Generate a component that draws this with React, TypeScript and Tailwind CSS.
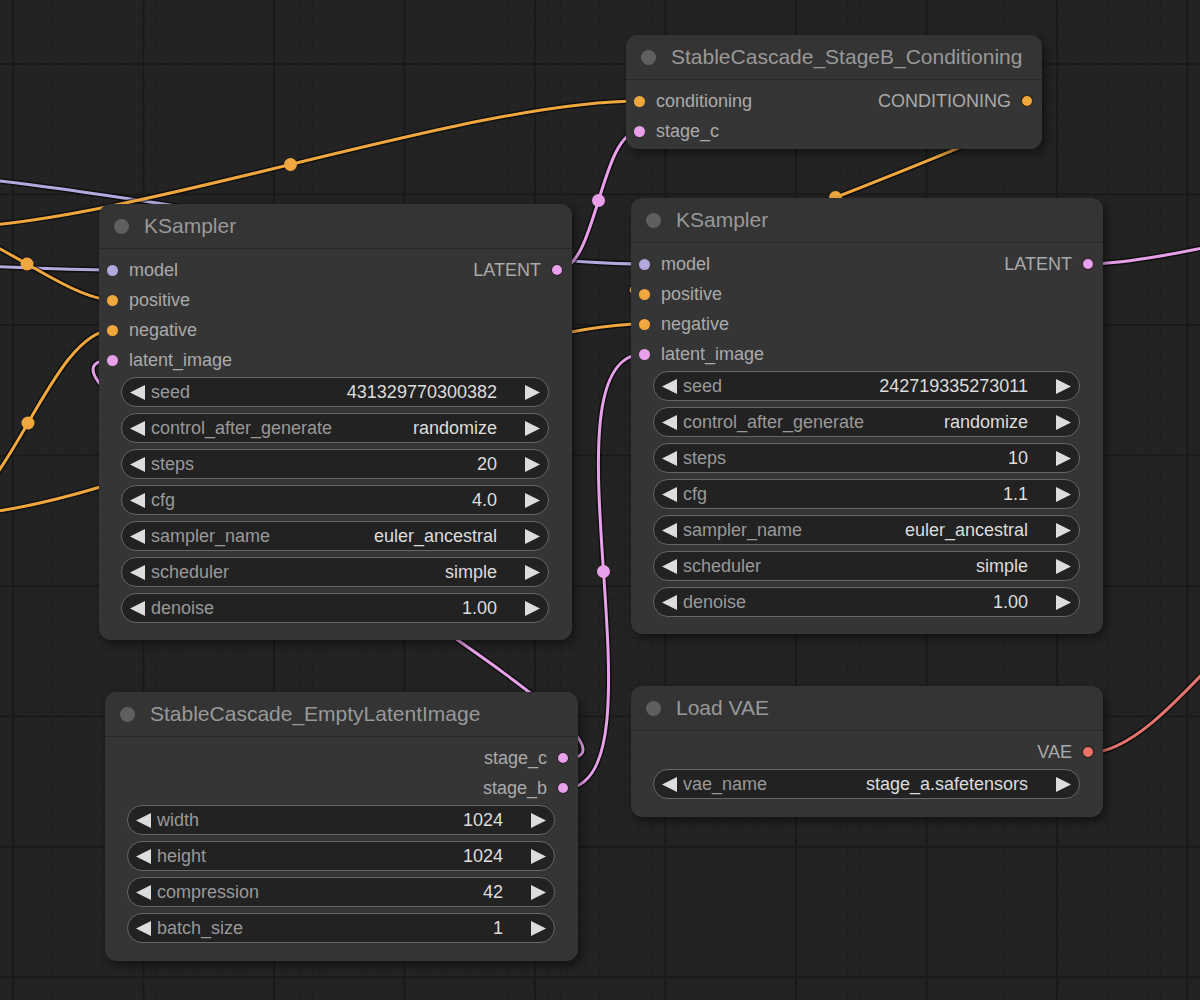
import React from 'react';

type Slot = { label: string; dot: string };
type Row = { in?: Slot; out?: Slot };
type Widget = { label: string; value: string };
type NodeDef = { pos: string; title: string; rows: Row[]; widgets: Widget[]; body: string };

const ORANGE = '#f0a83e';
const LAVENDER = '#b4a8de';
const PINK = '#e8a0ea';
const RED = '#e4746c';

const model: Slot = { label: 'model', dot: 'bg-[#b4a8de]' };
const positive: Slot = { label: 'positive', dot: 'bg-[#f0a83e]' };
const negative: Slot = { label: 'negative', dot: 'bg-[#f0a83e]' };
const latentImage: Slot = { label: 'latent_image', dot: 'bg-[#e8a0ea]' };
const latentOut: Slot = { label: 'LATENT', dot: 'bg-[#e8a0ea]' };

const sampler = (seed: string, steps: string, cfg: string): Widget[] => [
  { label: 'seed', value: seed },
  { label: 'control_after_generate', value: 'randomize' },
  { label: 'steps', value: steps },
  { label: 'cfg', value: cfg },
  { label: 'sampler_name', value: 'euler_ancestral' },
  { label: 'scheduler', value: 'simple' },
  { label: 'denoise', value: '1.00' },
];

const samplerRows: Row[] = [{ in: model, out: latentOut }, { in: positive }, { in: negative }, { in: latentImage }];

const nodes: NodeDef[] = [
  {
    pos: 'left-[626px] top-[35px] w-[416px]',
    title: 'StableCascade_StageB_Conditioning',
    rows: [
      { in: { label: 'conditioning', dot: 'bg-[#f0a83e]' }, out: { label: 'CONDITIONING', dot: 'bg-[#f0a83e]' } },
      { in: { label: 'stage_c', dot: 'bg-[#e8a0ea]' } },
    ],
    widgets: [],
    body: 'pt-[6px] pb-[3px]',
  },
  {
    pos: 'left-[99px] top-[204px] w-[473px]',
    title: 'KSampler',
    rows: samplerRows,
    widgets: sampler('431329770300382', '20', '4.0'),
    body: 'pt-[6px] pb-[17px]',
  },
  {
    pos: 'left-[631px] top-[198px] w-[472px]',
    title: 'KSampler',
    rows: samplerRows,
    widgets: sampler('242719335273011', '10', '1.1'),
    body: 'pt-[6px] pb-[17px]',
  },
  {
    pos: 'left-[105px] top-[692px] w-[473px]',
    title: 'StableCascade_EmptyLatentImage',
    rows: [{ out: { label: 'stage_c', dot: 'bg-[#e8a0ea]' } }, { out: { label: 'stage_b', dot: 'bg-[#e8a0ea]' } }],
    widgets: [
      { label: 'width', value: '1024' },
      { label: 'height', value: '1024' },
      { label: 'compression', value: '42' },
      { label: 'batch_size', value: '1' },
    ],
    body: 'pt-[6px] pb-[18px]',
  },
  {
    pos: 'left-[631px] top-[686px] w-[472px]',
    title: 'Load VAE',
    rows: [{ out: { label: 'VAE', dot: 'bg-[#e4746c]' } }],
    widgets: [{ label: 'vae_name', value: 'stage_a.safetensors' }],
    body: 'pt-[6px] pb-[18px]',
  },
];

// link: [x1, y1, x2, y2, colour, show centre dot]
const links: [number, number, number, number, string, boolean][] = [
  [-150, 262, 113, 270, LAVENDER, false],
  [-150, 170, 644, 264, LAVENDER, false],
  [-59, 228, 640, 101, ORANGE, true],
  [-59, 228, 113, 300, ORANGE, true],
  [-57, 516, 113, 330, ORANGE, true],
  [-57, 516, 644, 324, ORANGE, false],
  [557, 270, 640, 131, PINK, true],
  [563, 759, 113, 360, PINK, false],
  [563, 789, 644, 354, PINK, true],
  [1027, 101, 644, 294, ORANGE, true],
  [1088, 264, 1400, 215, PINK, false],
  [1088, 753, 1350, 560, RED, false],
];

const bezier = (x1: number, y1: number, x2: number, y2: number) => {
  const d = Math.hypot(x2 - x1, y2 - y1) * 0.25;
  return `M${x1} ${y1} C${x1 + d} ${y1} ${x2 - d} ${y2} ${x2} ${y2}`;
};

const Arrow = ({ right }: { right?: boolean }) => (
  <svg width="15" height="15" viewBox="0 0 15 15" className="shrink-0">
    <polygon points={right ? '0,0 15,7.5 0,15' : '15,0 0,7.5 15,15'} fill="#dddddd" />
  </svg>
);

const GraphNode = ({ n }: { n: NodeDef }) => (
  <div className={`absolute ${n.pos} rounded-[12px] bg-[#353535] shadow-[3px_4px_8px_rgba(0,0,0,0.45)]`}>
    <div className="flex h-[45px] items-center gap-[15px] rounded-t-[12px] border-b border-[#282828] bg-[#343434] pl-[15px]">
      <span className="size-[15px] rounded-full bg-[#5f5f5f]" />
      <span className="text-[21px] text-[#999]">{n.title}</span>
    </div>
    <div className={n.body}>
      {n.rows.map((r, i) => (
        <div key={i} className="flex h-[30px] items-center justify-between text-[18px] text-[#aaa]">
          {r.in ? (
            <div className="flex items-center gap-[11px] pl-[8px]">
              <span className={`size-[11px] rounded-full ${r.in.dot}`} />
              <span>{r.in.label}</span>
            </div>
          ) : (
            <span />
          )}
          {r.out && (
            <div className="flex items-center gap-[10px] pr-[9px]">
              <span>{r.out.label}</span>
              <span className={`size-[12px] rounded-full border border-black/80 ${r.out.dot}`} />
            </div>
          )}
        </div>
      ))}
      {n.widgets.length > 0 && (
        <div className="mt-[2px] ml-[22px] mr-[23px] flex flex-col gap-[6px]">
          {n.widgets.map((w) => (
            <div key={w.label} className="flex h-[30px] items-center rounded-full border border-[#666] bg-[#222] px-[8px] text-[18px]">
              <Arrow />
              <span className="ml-[6px] text-[#999]">{w.label}</span>
              <span className="ml-auto mr-[28px] text-[#ddd]">{w.value}</span>
              <Arrow right />
            </div>
          ))}
        </div>
      )}
    </div>
  </div>
);

export default function App() {
  return (
    <div className="relative h-[1000px] w-[1200px] overflow-hidden bg-[#232323] font-['Liberation_Sans',Arial,sans-serif] [background-image:linear-gradient(to_right,#1a1a1a_2px,transparent_2px),linear-gradient(to_bottom,#1a1a1a_2px,transparent_2px),linear-gradient(to_right,#1f1f1f_1px,transparent_1px),linear-gradient(to_bottom,#1f1f1f_1px,transparent_1px)] [background-position:12px_63px] [background-size:130.5px_130.5px,130.5px_130.5px,13.05px_13.05px,13.05px_13.05px]">
      <svg width="1200" height="1000" className="absolute inset-0">
        {links.map(([x1, y1, x2, y2, c], i) => (
          <g key={i} fill="none">
            <path d={bezier(x1, y1, x2, y2)} stroke="rgba(0,0,0,0.55)" strokeWidth="6" />
            <path d={bezier(x1, y1, x2, y2)} stroke={c} strokeWidth="3" />
          </g>
        ))}
        {links.map(([x1, y1, x2, y2, c, dot], i) =>
          dot ? <circle key={i} cx={(x1 + x2) / 2} cy={(y1 + y2) / 2} r="6.5" fill={c} /> : null
        )}
      </svg>
      {nodes.map((n, i) => (
        <GraphNode key={i} n={n} />
      ))}
    </div>
  );
}
